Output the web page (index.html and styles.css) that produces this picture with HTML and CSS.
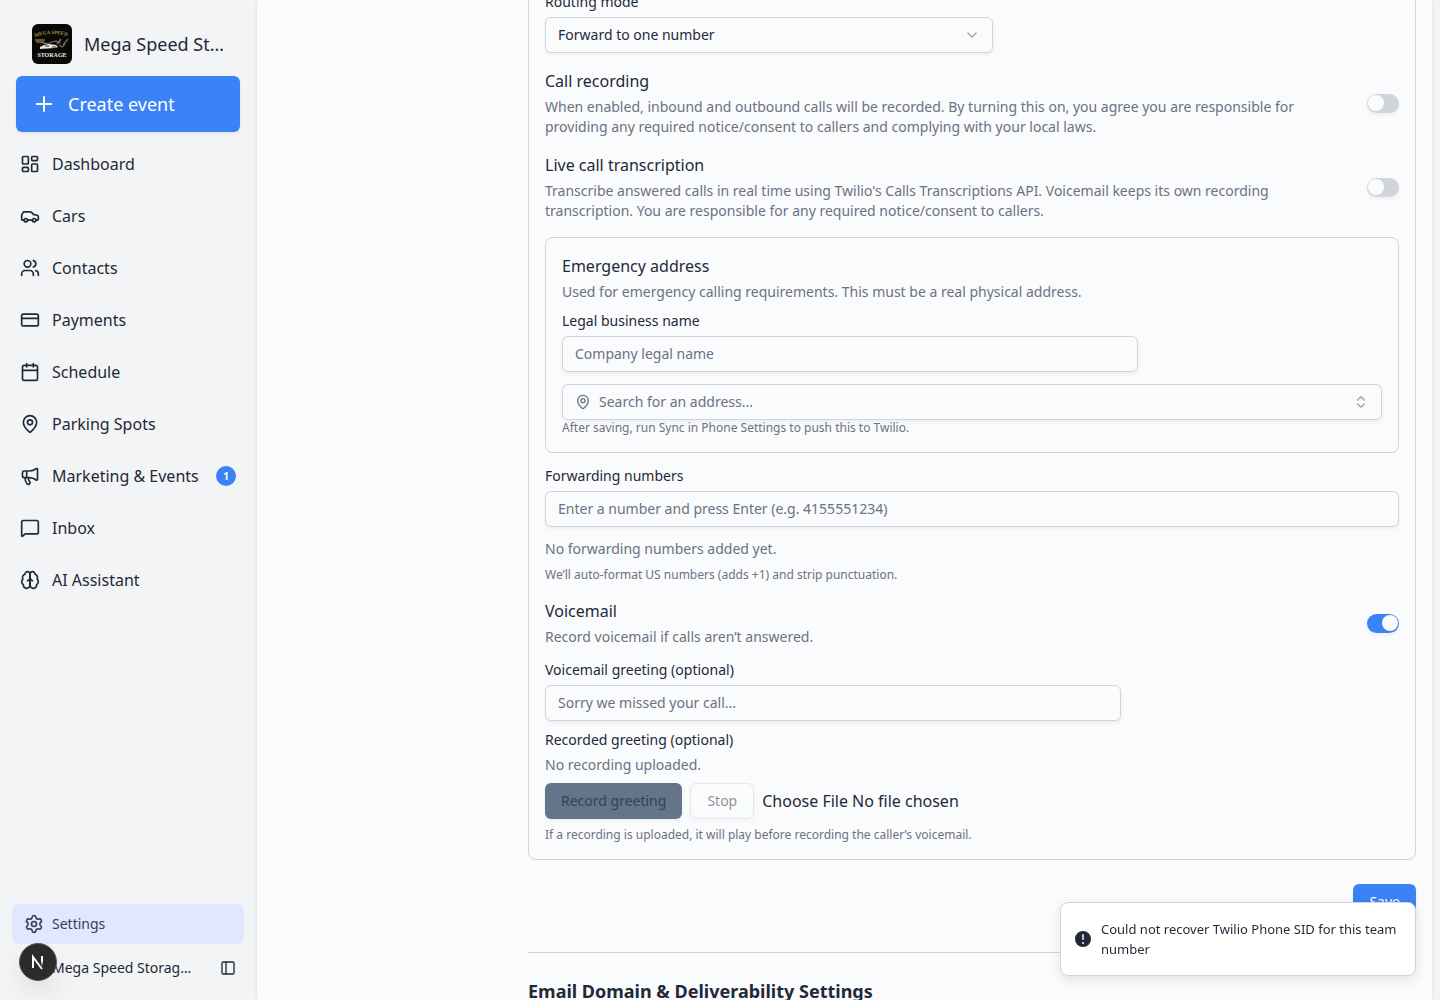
FILE: index.html
```html
<!DOCTYPE html>
<html lang="en">
<head>
<meta charset="utf-8">
<meta name="viewport" content="width=device-width, initial-scale=1">
<title>Phone Settings</title>
<link rel="stylesheet" href="styles.css">
</head>
<body>
<div class="app">
  <aside class="sidebar">
    <div class="brand">
      <svg class="brand-logo" viewBox="0 0 40 40" aria-hidden="true">
        <rect width="40" height="40" fill="#080a08"/>
        <path id="arc" d="M3 13Q20 7 38 13" fill="none"/>
        <text class="logo-arc"><textPath href="#arc">MEGA SPEED</textPath></text>
        <path d="M3 16h10M4 18h8M11 19l6 1" stroke="#8b6b42" stroke-width="1.500"/>
        <path d="M17 19l7-2 3 2 2-4M25 20l4-5M31 21l5-6M27 21l3 2 3-3" fill="none" stroke="#77705f" stroke-width="1.300"/>
        <path d="M8 23l4-2 5-1 7 1 2 2-3 1-15 1z" fill="#e8e8e0"/>
        <path d="M13 22h4M20 23h4" stroke="#303030"/>
        <text class="logo-base" x="20" y="33" text-anchor="middle">STORAGE</text>
      </svg>
      <span class="brand-name">Mega Speed Storage</span>
    </div>
    <button class="create" type="button">
      <svg class="icon icon-lg" viewBox="0 0 24 24"><path d="M5 12h14M12 5v14"/></svg>
      Create event
    </button>
    <nav class="nav">
      <a href="#dashboard"><svg class="icon" viewBox="0 0 24 24"><rect width="7" height="9" x="3" y="3" rx="1"/><rect width="7" height="5" x="14" y="3" rx="1"/><rect width="7" height="9" x="14" y="12" rx="1"/><rect width="7" height="5" x="3" y="16" rx="1"/></svg>Dashboard</a>
      <a href="#cars"><svg class="icon" viewBox="0 0 24 24"><path d="M19 17h2c.6 0 1-.4 1-1v-3c0-.9-.7-1.700-1.500-1.900L16 10s-1.300-1.400-2.200-2.300c-.5-.4-1.100-.7-1.800-.7H5c-.6 0-1.100.4-1.400.9l-1.500 2.800C2 11 2 11.500 2 12v4c0 .6.4 1 1 1h2" /><circle cx="7" cy="17" r="2"/><path d="M9 17h6"/><circle cx="17" cy="17" r="2"/></svg>Cars</a>
      <a href="#contacts"><svg class="icon" viewBox="0 0 24 24"><path d="M16 21v-2a4 4 0 0 0-4-4H6a4 4 0 0 0-4 4v2"/><circle cx="9" cy="7" r="4"/><path d="M22 21v-2a4 4 0 0 0-3-3.870M16 3.130a4 4 0 0 1 0 7.750"/></svg>Contacts</a>
      <a href="#payments"><svg class="icon" viewBox="0 0 24 24"><rect width="20" height="14" x="2" y="5" rx="2"/><path d="M2 10h20"/></svg>Payments</a>
      <a href="#schedule"><svg class="icon" viewBox="0 0 24 24"><path d="M8 2v4M16 2v4M3 10h18"/><rect width="18" height="18" x="3" y="4" rx="2"/></svg>Schedule</a>
      <a href="#parking"><svg class="icon" viewBox="0 0 24 24"><path d="M20 10c0 4.993-5.539 10.193-7.399 11.799a1 1 0 0 1-1.202 0C9.539 20.193 4 14.993 4 10a8 8 0 0 1 16 0"/><circle cx="12" cy="10" r="3"/></svg>Parking Spots</a>
      <a href="#marketing"><svg class="icon" viewBox="0 0 24 24"><path d="M11 6a13 13 0 0 0 8.400-2.800A1 1 0 0 1 21 4v12a1 1 0 0 1-1.600.8A13 13 0 0 0 11 14H5a2 2 0 0 1-2-2V8a2 2 0 0 1 2-2zM6 14a12 12 0 0 0 2.400 7.200 2 2 0 0 0 3.200-2.400A8 8 0 0 1 10 14M8 6v8"/></svg>Marketing &amp; Events<span class="count">1</span></a>
      <a href="#inbox"><svg class="icon" viewBox="0 0 24 24"><path d="M22 17a2 2 0 0 1-2 2H6.828a2 2 0 0 0-1.414.586l-2.202 2.202A.71.71 0 0 1 2 21.286V5a2 2 0 0 1 2-2h16a2 2 0 0 1 2 2z"/></svg>Inbox</a>
      <a href="#assistant"><svg class="icon" viewBox="0 0 24 24"><path d="M12 5a3 3 0 1 0-5.997.125 4 4 0 0 0-2.526 5.770 4 4 0 0 0 .556 6.588A4 4 0 1 0 12 18Z"/><path d="M12 5a3 3 0 1 1 5.997.125 4 4 0 0 1 2.526 5.770 4 4 0 0 1-.556 6.588A4 4 0 1 1 12 18Z"/><path d="M15 13a4.500 4.500 0 0 1-3-4 4.500 4.500 0 0 1-3 4M12 18V9"/></svg>AI Assistant</a>
    </nav>
    <div class="sidebar-foot">
      <a class="settings" href="#settings" aria-current="page"><svg class="icon" viewBox="0 0 24 24"><path d="M9.671 4.136a2.340 2.340 0 0 1 4.659 0 2.340 2.340 0 0 0 3.319 1.915 2.340 2.340 0 0 1 2.330 4.033 2.340 2.340 0 0 0 0 3.831 2.340 2.340 0 0 1-2.330 4.033 2.340 2.340 0 0 0-3.319 1.915 2.340 2.340 0 0 1-4.659 0 2.340 2.340 0 0 0-3.320-1.915 2.340 2.340 0 0 1-2.330-4.033 2.340 2.340 0 0 0 0-3.831A2.340 2.340 0 0 1 6.350 6.051a2.340 2.340 0 0 0 3.319-1.915"/><circle cx="12" cy="12" r="3"/></svg>Settings</a>
      <div class="team">
        <span class="team-name">Mega Speed Storage Team</span>
        <button class="collapse" type="button" aria-label="Toggle sidebar"><svg class="icon icon-sm" viewBox="0 0 24 24"><rect width="18" height="18" x="3" y="3" rx="2"/><path d="M9 3v18"/></svg></button>
      </div>
    </div>
  </aside>

  <main class="main">
    <div class="content">
      <section class="card">
        <div class="field">
          <label for="routing">Routing mode</label>
          <div class="select">
            <select id="routing"><option>Forward to one number</option></select>
            <svg class="icon icon-sm faint" viewBox="0 0 24 24"><path d="m6 9 6 6 6-6"/></svg>
          </div>
        </div>

        <div class="toggle-row">
          <div class="stack">
            <label class="title" for="recording">Call recording</label>
            <p>When enabled, inbound and outbound calls will be recorded. By turning this on, you agree you are responsible for providing any required notice/consent to callers and complying with your local laws.</p>
          </div>
          <input class="switch" id="recording" type="checkbox" role="switch">
        </div>

        <div class="toggle-row">
          <div class="stack">
            <label class="title" for="transcription">Live call transcription</label>
            <p>Transcribe answered calls in real time using Twilio's Calls Transcriptions API. Voicemail keeps its own recording transcription. You are responsible for any required notice/consent to callers.</p>
          </div>
          <input class="switch" id="transcription" type="checkbox" role="switch">
        </div>

        <div class="address">
          <div class="stack">
            <h3 class="title">Emergency address</h3>
            <p>Used for emergency calling requirements. This must be a real physical address.</p>
          </div>
          <div class="field">
            <label for="legal">Legal business name</label>
            <input class="text-input medium" id="legal" type="text" placeholder="Company legal name">
          </div>
          <div>
            <button class="combo" type="button">
              <svg class="icon icon-sm" viewBox="0 0 24 24"><path d="M20 10c0 4.993-5.539 10.193-7.399 11.799a1 1 0 0 1-1.202 0C9.539 20.193 4 14.993 4 10a8 8 0 0 1 16 0"/><circle cx="12" cy="10" r="3"/></svg>
              <span>Search for an address...</span>
              <svg class="icon icon-sm faint" viewBox="0 0 24 24"><path d="m7 15 5 5 5-5M7 9l5-5 5 5"/></svg>
            </button>
            <p class="hint">After saving, run Sync in Phone Settings to push this to Twilio.</p>
          </div>
        </div>

        <div class="field">
          <label for="forwarding">Forwarding numbers</label>
          <input class="text-input" id="forwarding" type="text" placeholder="Enter a number and press Enter (e.g. 4155551234)">
          <p class="empty">No forwarding numbers added yet.</p>
          <p class="hint">We’ll auto-format US numbers (adds +1) and strip punctuation.</p>
        </div>

        <div class="toggle-row">
          <div class="stack">
            <label class="title" for="voicemail">Voicemail</label>
            <p>Record voicemail if calls aren’t answered.</p>
          </div>
          <input class="switch" id="voicemail" type="checkbox" role="switch" checked>
        </div>

        <div class="greetings">
          <div class="field">
            <label for="greeting">Voicemail greeting (optional)</label>
            <input class="text-input medium" id="greeting" type="text" placeholder="Sorry we missed your call...">
          </div>
          <div class="field">
            <label for="upload">Recorded greeting (optional)</label>
            <p>No recording uploaded.</p>
            <div class="actions">
              <button class="button record" type="button">Record greeting</button>
              <button class="button stop" type="button" disabled>Stop</button>
              <input class="file" id="upload" type="file">
            </div>
            <p class="hint">If a recording is uploaded, it will play before recording the caller’s voicemail.</p>
          </div>
        </div>
      </section>

      <div class="submit"><button class="button save" type="button">Save</button></div>
      <section class="email">
        <h2>Email Domain &amp; Deliverability Settings</h2>
      </section>
    </div>
  </main>
</div>

<button class="dev-badge" type="button" aria-label="Developer tools">
  <svg viewBox="0 0 38 38"><defs><linearGradient id="fade" x1="0" y1="0" x2="0" y2="1"><stop offset=".5" stop-color="#fff"/><stop offset="1" stop-color="#fff" stop-opacity="0"/></linearGradient></defs><circle cx="19" cy="19" r="18.500" fill="#2b2b2b" stroke="#555" stroke-width="1"/><path d="M14 25V14l9 12" fill="none" stroke="#fff" stroke-width="2"/><path d="M22 13h2v10h-2z" fill="url(#fade)"/></svg>
</button>

<div class="toast" role="status">
  <svg class="toast-icon" viewBox="0 0 20 20"><path fill="currentColor" fill-rule="evenodd" d="M18 10a8 8 0 1 1-16 0 8 8 0 0 1 16 0Zm-8-5a.75.75 0 0 1 .75.75v4.500a.75.75 0 0 1-1.500 0v-4.500A.75.75 0 0 1 10 5Zm0 10a1 1 0 1 0 0-2 1 1 0 0 0 0 2Z"/></svg>
  <span>Could not recover Twilio Phone SID for this team number</span>
</div>
</body>
</html>
```
FILE: styles.css
```css
:root {
  --ink: #1f2937;
  --muted: #6b7280;
  --line: #d1d5db;
  --blue: #3b82f6;
  --page: #fafbfd;
  --side: #f3f4f6;
  --shadow: 0 2px 4px rgba(0, 0, 0, .06);
}

* { box-sizing: border-box; }

body {
  margin: 0;
  height: 100vh;
  overflow: hidden;
  background: var(--side);
  color: var(--ink);
  font: 14px/20px "Noto Sans", sans-serif;
}

h2, h3, p { margin: 0; font-weight: 400; }
button, input, select { font: inherit; color: inherit; }
button { cursor: pointer; }
a { color: inherit; text-decoration: none; }

.icon {
  flex: none;
  width: 20px;
  height: 20px;
  fill: none;
  stroke: currentColor;
  stroke-width: 2;
  stroke-linecap: round;
  stroke-linejoin: round;
}
.icon-sm { width: 16px; height: 16px; }
.icon-lg { width: 24px; height: 24px; }
.faint { opacity: .4; }

.app {
  display: grid;
  grid-template-columns: 257px minmax(0, 1fr);
  height: 100%;
  padding-right: 8px;
}

/* Sidebar */
.sidebar {
  display: flex;
  flex-direction: column;
  padding: 24px 17px 12px 16px;
}
.brand {
  display: flex;
  align-items: center;
  gap: 12px;
  padding: 0 16px;
  font-size: 18px;
  line-height: 28px;
}
.brand-logo { flex: none; width: 40px; height: 40px; border-radius: 6px; }
.logo-arc, .logo-base { font-family: "Liberation Serif", serif; font-weight: 700; }
.logo-arc { fill: #b08a55; font-size: 5px; }
.logo-base { fill: #efece2; font-size: 6px; }
.brand-name, .team-name { overflow: hidden; text-overflow: ellipsis; white-space: nowrap; }
.create {
  display: flex;
  align-items: center;
  gap: 12px;
  height: 56px;
  margin-top: 12px;
  padding: 0 16px;
  border: 0;
  border-radius: 6px;
  background: var(--blue);
  box-shadow: var(--shadow);
  color: #fff;
  font-size: 18px;
}
.nav {
  display: flex;
  flex-direction: column;
  gap: 12px;
  margin-top: 12px;
  font-size: 16px;
}
.nav a {
  display: flex;
  align-items: center;
  gap: 12px;
  height: 40px;
  padding: 0 4px;
}
.count {
  width: 20px;
  margin-left: auto;
  border-radius: 50%;
  background: var(--blue);
  color: #fff;
  font-size: 10px;
  font-weight: 700;
  text-align: center;
}
.sidebar-foot { margin: auto -4px 0; }
.settings {
  display: flex;
  align-items: center;
  gap: 8px;
  height: 40px;
  padding: 0 12px;
  border-radius: 6px;
  background: #e0e7ff;
  color: #374151;
}
.team {
  display: flex;
  align-items: center;
  gap: 28px;
  height: 40px;
  padding: 0 8px 0 40px;
  margin-top: 4px;
}
.collapse { display: flex; margin-left: auto; padding: 0; border: 0; background: none; }

/* Main panel, scrolled to the phone section */
.main {
  display: grid;
  grid-template-columns: 239px minmax(0, 1fr);
  gap: 16px;
  padding: 0 16px;
  overflow: hidden;
  background: var(--page);
  box-shadow: 0 0 5px rgba(0, 0, 0, .08);
}
.content { grid-column: 2; }
.card {
  display: flex;
  flex-direction: column;
  gap: 16px;
  margin-top: -22px;
  padding: 16px;
  border: 1px solid var(--line);
  border-radius: 8px;
}
.field { display: flex; flex-direction: column; gap: 8px; }
.field label { line-height: 14px; }
.stack { display: flex; flex-direction: column; gap: 4px; }
.title { font-size: 16px; line-height: 24px; }
p { color: var(--muted); }
.hint { font-size: 12px; line-height: 16px; }
.empty { margin-top: 4px; }

.select { position: relative; max-width: 448px; }
.select select, .text-input, .combo {
  display: block;
  width: 100%;
  height: 36px;
  padding: 0 12px;
  border: 1px solid var(--line);
  border-radius: 6px;
  background: var(--page);
  box-shadow: var(--shadow);
  appearance: none;
}
.select .icon { position: absolute; top: 10px; right: 13px; pointer-events: none; }
.text-input { padding-bottom: 2px; }
.text-input::placeholder { color: var(--muted); opacity: 1; }
.medium { max-width: 576px; }

.toggle-row {
  display: flex;
  align-items: center;
  justify-content: space-between;
  gap: 16px;
}
.switch {
  flex: none;
  display: flex;
  align-items: center;
  width: 32px;
  height: 19px;
  margin: 0;
  padding: 0 1px;
  border-radius: 10px;
  background: var(--line);
  box-shadow: var(--shadow);
  appearance: none;
}
.switch::before {
  content: "";
  width: 16px;
  height: 16px;
  border-radius: 50%;
  background: var(--page);
}
.switch:checked { justify-content: flex-end; background: var(--blue); }

.address {
  display: flex;
  flex-direction: column;
  gap: 12px;
  padding: 16px;
  border: 1px solid var(--line);
  border-radius: 8px;
}
.combo { display: flex; align-items: center; gap: 8px; color: var(--muted); }
.combo .faint { margin-left: auto; color: var(--ink); }

.greetings { display: flex; flex-direction: column; gap: 12px; }
.actions { display: flex; align-items: center; gap: 8px; }
.button {
  height: 36px;
  padding: 0 16px;
  border: 0;
  border-radius: 6px;
  box-shadow: var(--shadow);
}
.record { background: #64748b; color: #374151; }
.stop { border: 1px solid var(--line); background: var(--page); color: var(--ink); opacity: .5; }
.file { font-size: 16px; line-height: 24px; }
.file::file-selector-button {
  margin: 0 4px 0 0;
  padding: 0;
  border: 0;
  background: none;
  color: inherit;
  font: inherit;
}
.submit { display: flex; justify-content: flex-end; padding: 24px 0 32px; }
.save { background: var(--blue); color: #fff; }
.email { padding-top: 24px; border-top: 1px solid var(--line); }
.email h2 { font-size: 18px; line-height: 28px; font-weight: 700; }

/* Floating layers */
.dev-badge {
  position: fixed;
  bottom: 19px;
  left: 19px;
  width: 38px;
  height: 38px;
  padding: 0;
  border: 0;
  border-radius: 50%;
  background: none;
  box-shadow: 0 12px 24px rgba(0, 0, 0, .08);
}
.dev-badge svg { display: block; }
.toast {
  position: fixed;
  right: 24px;
  bottom: 24px;
  display: flex;
  align-items: center;
  gap: 8px;
  width: 356px;
  padding: 16px 16px 16px 12px;
  border: 1px solid var(--line);
  border-radius: 8px;
  background: #fff;
  box-shadow: 0 4px 12px rgba(0, 0, 0, .1);
  font-size: 13px;
}
.toast-icon { flex: none; width: 20px; height: 20px; }
```
